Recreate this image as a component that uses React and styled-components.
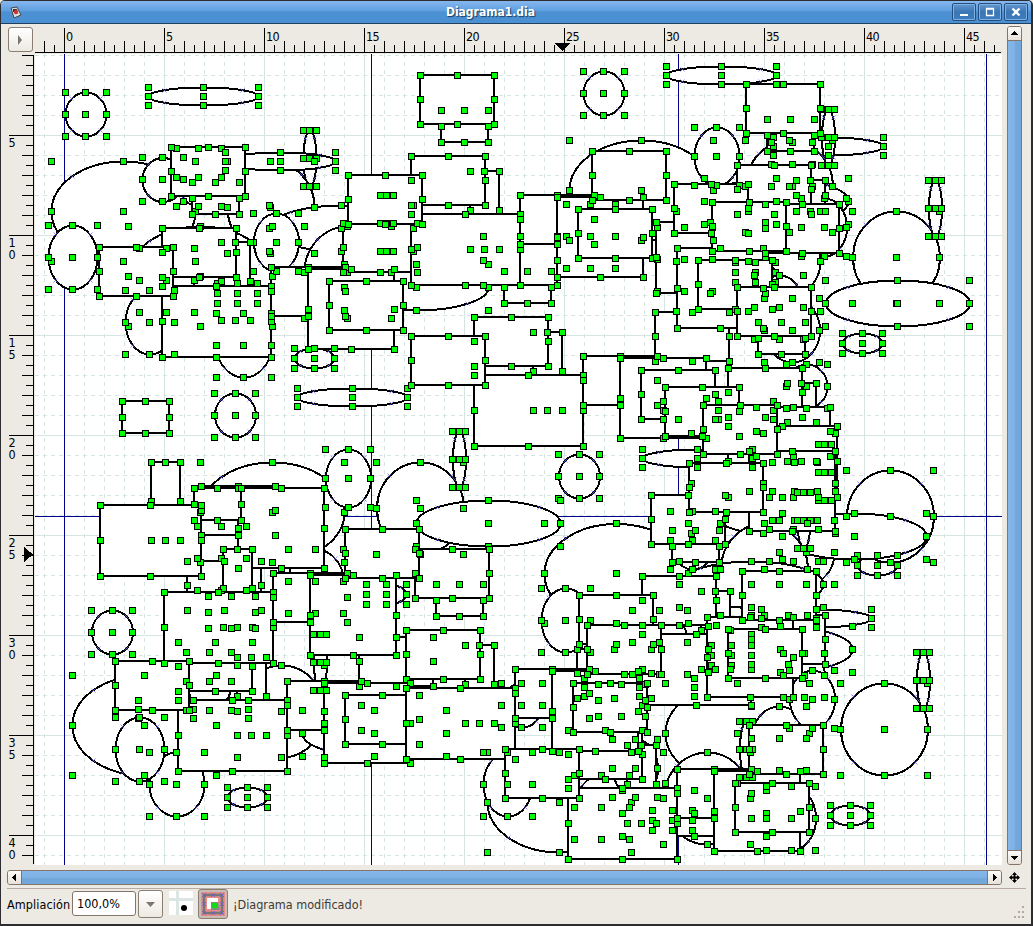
import React from "react";
import styled, { createGlobalStyle } from "styled-components";

const Global = createGlobalStyle`
  * { box-sizing: border-box; }
  body { margin: 0; background: #edeae3; overflow: hidden; }
`;
const sans = `"DejaVu Sans Condensed", "DejaVu Sans", sans-serif`;

/* Diagram objects, back to front.
   e = ellipse [cx, cy, rx, ry], r = box [x, y, width, height] */
const e = (cx, cy, rx, ry) => ({ kind: "e", cx, cy, rx, ry });
const r = (x, y, w, h) => ({ kind: "r", x, y, w, h });
const box = (x, y) => r(x, y, 74, 49);
const small = (x, y) => r(x, y, 47, 32);
const slim = (x, y) => r(x, y, 29, 78);
const panel = (x, y) => r(x, y, 109, 71);
const card = (x, y) => r(x, y, 86, 80);
const disc = (x, y) => e(x, y, 20.5, 22);
const wide = (x, y) => e(x, y, 55, 9);
const tall = (x, y) => e(x, y, 6.5, 28);
const big = (x, y) => e(x, y, 43.5, 46);
const huge = (x, y) => e(x, y, 72, 50);
const flat = (x, y) => e(x, y, 72, 23);
const mid = (x, y) => e(x, y, 22.5, 29);
const egg = (x, y) => e(x, y, 24.5, 32);
const round = (x, y) => e(x, y, 27.5, 32);
const oval = (x, y) => e(x, y, 20, 10);

const SHAPES = [
  disc(85.5, 114), wide(203, 96), huge(123, 211), mid(198.5, 177), tall(309.5, 158),
  big(270.5, 207), wide(280, 161), disc(162.5, 179.5), flat(341, 228), huge(200, 276),
  mid(276, 242), big(347.5, 272), tall(386.5, 223), round(166.5, 280), oval(237, 293),
  egg(149.5, 322), egg(72.5, 257), round(243.5, 345), oval(314, 358), flat(416, 287),
  wide(352, 397), disc(235, 415), egg(590.5, 236), disc(603.5, 93), huge(641, 190),
  wide(721, 75), mid(716.5, 156), wide(828, 146), round(684.5, 259), disc(792, 164),
  big(789, 186), flat(776, 201), mid(824, 227), tall(828, 137), big(896, 257),
  tall(935, 208), flat(897.5, 303), huge(748, 261), oval(755, 272), round(792, 330),
  egg(779, 307), oval(862, 343), disc(806.5, 386), wide(718, 410), tall(824.5, 472),
  huge(763, 483), mid(794.5, 491), egg(793.5, 529), oval(877, 565), big(890, 516),
  round(806.5, 552), flat(854, 536), tall(803.5, 520), wide(697, 458), disc(579, 476),
  huge(616, 573.5), egg(565.5, 620), mid(692.5, 540), big(764, 569), flat(751, 584),
  round(659.5, 642), oval(731, 655), wide(816, 618), flat(780, 649), disc(804, 675),
  huge(272, 512), round(315.5, 581), mid(348, 478), egg(221.5, 558), oval(386, 594),
  big(420, 508), tall(459, 459), flat(488, 523), disc(112, 632), wide(193, 709),
  huge(144, 725), round(176.5, 784), egg(139.5, 749), mid(209, 681), big(281, 711),
  tall(320, 662), flat(374, 733), oval(247, 797), disc(521.5, 705), huge(559, 802),
  egg(507.5, 784), round(601.5, 807), wide(639, 687), mid(635, 768), oval(672, 820),
  huge(737, 733), big(707, 798), flat(694, 813), egg(791, 818), tall(746, 749),
  round(779, 738), mid(812, 699), big(884, 729), tall(923, 680), oval(850, 815),

  small(192, 182), box(171, 147), slim(221, 242), panel(162, 286), box(162, 228), box(99, 247),
  box(271, 267), card(308, 269), r(122, 401, 47, 32), small(441, 110), box(420, 75),
  slim(470, 171), small(504, 271), box(483, 236), box(343, 223), panel(411, 214),
  box(411, 156), box(348, 175), box(329, 281), box(520, 195), card(557, 197),
  box(592, 151), box(578, 209), slim(533, 332), panel(474, 375), box(474, 317), box(411, 336),

  small(767, 119), box(746, 84), panel(656, 222), r(796, 180, 29, 31), box(737, 165),
  box(674, 184), box(655, 312), card(677, 248), box(698, 260), box(765, 204), box(712, 202),
  small(758, 322), box(737, 287), box(583, 356), card(620, 358), box(641, 370),
  slim(787, 383), box(728, 368), box(665, 387), box(756, 407), panel(728, 426),
  card(749, 451), box(703, 405), small(672, 530), box(651, 495), box(689, 463),

  slim(151, 462), box(187, 561), box(201, 486), card(238, 488), small(194, 488),
  slim(223, 549), r(100, 505, 101, 71), small(208, 596), slim(237, 657), box(178, 642),
  panel(164, 592), panel(178, 700), box(115, 661), box(273, 573), box(359, 637),
  card(310, 575), small(436, 584), box(415, 549), box(345, 529), slim(465, 645),
  box(406, 630), box(287, 681), card(324, 683), box(345, 695), panel(406, 688),

  slim(701, 591), box(577, 649), box(642, 576), panel(642, 634), small(598, 684),
  slim(627, 745), box(568, 730), panel(568, 788), box(515, 669), card(552, 671),
  box(505, 749), box(579, 595), box(587, 625), box(573, 683), box(751, 615),
  card(707, 617), box(742, 571), box(728, 629), box(677, 769), card(714, 771),
  box(749, 725), box(735, 783),
];

const knobs = (s) => {
  const [x0, y0, w, h] =
    s.kind === "r" ? [s.x, s.y, s.w, s.h] : [s.cx - s.rx, s.cy - s.ry, s.rx * 2, s.ry * 2];
  const pts = [];
  for (let i = 0; i < 3; i++)
    for (let j = 0; j < 3; j++) {
      if (s.kind === "r" && i === 1 && j === 1) continue;
      pts.push([Math.floor(x0 + (w * i) / 2), Math.floor(y0 + (h * j) / 2 + 0.4)]);
    }
  return pts;
};

const Shape = ({ s }) => {
  if (s.kind === "r")
    return <rect x={s.x} y={s.y} width={s.w} height={s.h} fill="#fff" stroke="#000" strokeWidth="2" />;
  const dx = s.rx * 0.707, dy = s.ry * 0.707;
  const marks = [[-dx, -dy], [dx, -dy], [-dx, dy], [dx, dy]]
    .map(([a, b]) => {
      const x = Math.round(s.cx + a), y = Math.round(s.cy + b);
      return `M${x - 1.5} ${y - 1.5}l4 4M${x + 2.5} ${y - 1.5}l-4 4`;
    })
    .join("");
  return (
    <g>
      <ellipse cx={s.cx + 0.5} cy={s.cy + 0.5} rx={s.rx} ry={s.ry} fill="#fff" stroke="#000" strokeWidth="2" />
      <path d={marks} stroke="#6464e4" strokeWidth="0.7" fill="none" shapeRendering="geometricPrecision" />
    </g>
  );
};

const range = (from, to, step) => {
  const out = [];
  for (let v = from; v <= to; v += step) out.push(v);
  return out;
};

const Grid = () => (
  <g stroke="#d5e5e2" strokeWidth="1">
    {range(44, 1001, 20).map((x) => (
      <path key={x} d={`M${x + 0.5} 54V865`} strokeDasharray={(x - 64) % 100 ? "4 4" : undefined} />
    ))}
    {range(55, 864, 20).map((y) => (
      <path key={y} d={`M35 ${y + 0.5}H1002`} strokeDasharray={(y - 35) % 100 ? "4 4" : undefined} />
    ))}
  </g>
);

const Diagram = () => (
  <Canvas viewBox="35 54 967 811" shapeRendering="crispEdges">
    <rect x="35" y="54" width="967" height="811" fill="#fff" />
    <Grid />
    <path d="M64.5 54V865M371.5 54V865M678.5 54V865M986.5 54V865M35 516.5H1002" stroke="#00008b" />
    {SHAPES.map((s, i) => <Shape key={i} s={s} />)}
    {SHAPES.flatMap((s, i) =>
      knobs(s).map(([x, y], j) => (
        <g key={`${i}-${j}`}>
          <rect x={x - 3} y={y - 3} width="7" height="7" fill="#000" />
          <rect x={x - 2} y={y - 2} width="5" height="5" fill="#0f0" />
        </g>
      ))
    )}
  </Canvas>
);

const HRuler = () => (
  <TopScale viewBox="35 24 967 30" shapeRendering="crispEdges">
    <path d="M35 52.5H1001" stroke="#000" />
    {range(44, 1000, 10).map((x) => {
      const top = (x - 64) % 100 === 0 ? 28 : (x - 64) % 20 === 0 ? 41 : 45;
      return <path key={x} d={`M${x + 0.5} ${top}V52`} stroke="#000" />;
    })}
    {range(0, 45, 5).map((n) => <text key={n} x={66 + n * 20} y="41">{n}</text>)}
    <path d="M555 43h15l-7.500 8z" fill="#000" />
  </TopScale>
);

const VRuler = () => (
  <SideScale viewBox="0 54 35 811" shapeRendering="crispEdges">
    <path d="M33.5 55V864" stroke="#000" />
    {range(55, 860, 10).map((y) => {
      const left = (y - 35) % 100 === 0 ? 9 : (y - 35) % 20 === 0 ? 22 : 26;
      return <path key={y} d={`M${left} ${y + 0.5}H33`} stroke="#000" />;
    })}
    {range(5, 40, 5).map((n) => (
      <text key={n}>
        {String(n).split("").map((d, i) => (
          <tspan key={i} x="8.5" y={47 + n * 20 + i * 12}>{d}</tspan>
        ))}
      </text>
    ))}
    <path d="M24 547v15l9-7.500z" fill="#000" />
  </SideScale>
);

const Window = styled.div`
  width: 1033px; height: 926px; display: flex; flex-direction: column;
  background: #edeae3; border: solid #2d2d30; border-width: 1px 2px 2px 1px;
  border-radius: 5px 5px 0 0; font-family: ${sans}; font-size: 12.5px; color: #000; overflow: hidden;
`;
const TitleBar = styled.header`
  height: 23px; flex: none; display: flex; align-items: center; padding: 0 3px 0 9px;
  background: linear-gradient(#86b7ee, #5e9fe0 45%, #4a90d2 50%, #4a90d2);
  border-bottom: 1px solid #20405f;
`;
const Title = styled.h1`
  flex: 1; margin: 0; padding-left: 7px; text-align: center; color: #fff;
  font: bold 12px ${sans}; text-shadow: 1px 1px 1px #1b3c60;
`;
const Controls = styled.div`display: flex; gap: 2px;`;
const Control = styled.button`
  width: 24px; height: 18px; padding: 0; border: 1px solid #254e7d; border-radius: 2px;
  background: linear-gradient(#6498d0, #3a76b4 50%, #3d7dc0);
  box-shadow: inset 0 0 0 1px #7fb0e2; display: flex; align-items: center; justify-content: center;
`;
const Workspace = styled.main`
  flex: none; display: grid; grid-template-columns: 34px 967px 1fr; grid-template-rows: 30px 811px;
`;
const Corner = styled.div`padding: 3px 0 0 7px;`;
const CornerButton = styled.button`
  width: 25px; height: 25px; padding: 0; border: 1px solid #8a7e73; border-radius: 3px;
  background: linear-gradient(#fff, #edeae3); display: flex; align-items: center; justify-content: center;
`;
const Scale = styled.svg`
  display: block;
  text { font: 12.5px ${sans}; letter-spacing: -0.6px; }
`;
const TopScale = styled(Scale)`width: 967px; height: 30px;`;
const SideScale = styled(Scale)`width: 35px; height: 811px; margin-left: -1px;`;
const Canvas = styled.svg`display: block; width: 967px; height: 811px;`;
const VTrack = styled.div`
  grid-column: 3; grid-row: 1 / span 2; margin: 2px 0 0 5px; width: 15px; height: 839px;
  display: flex; flex-direction: column; border: 1px solid #857468; border-radius: 3px; overflow: hidden;
`;
const HTrack = styled.div`
  width: 995px; height: 15px; display: flex; border: 1px solid #857468; border-radius: 3px; overflow: hidden;
`;
const Stepper = styled.div`
  flex: none; width: 13px; height: 13px;
  display: flex; align-items: center; justify-content: center; background: linear-gradient(#fdfcfb, #e6e1d8);
`;
const Thumb = styled.div`
  flex: 1; border: solid #857468; border-width: ${(p) => (p.$across ? "0 1px" : "1px 0")};
  background: linear-gradient(${(p) => (p.$across ? "to bottom" : "to right")}, #86b6ea, #7fb1e5 50%, #72a7dc 52%, #72a7dc);
`;
const ScrollRow = styled.div`
  flex: none; margin-top: 5px; padding-left: 6px; display: flex; align-items: center; gap: 7px;
`;
const StatusBar = styled.footer`
  flex: 1; margin: 3px 5px 0 6px; border-top: 1px solid #b7aaa2; display: flex; align-items: flex-start;
  padding-top: 1px;
`;
const Label = styled.span`line-height: 29px; width: 65px; white-space: nowrap; letter-spacing: 0.1px;`;
const ZoomInput = styled.div`
  width: 64px; height: 25px; margin-top: 1px; padding-left: 4px; line-height: 24px;
  background: #fff; border: 1px solid #857468; border-radius: 3px;
`;
const DropButton = styled(CornerButton)`height: 28px; margin: 0 6px 0 2px;`;
const SnapButton = styled(CornerButton)`
  width: 30px; height: 30px; margin: -1px 5px 0 5px; background: #c6beb5;
`;
const Message = styled.span`line-height: 29px; color: #3c3b39; flex: 1;`;
const Grip = styled.svg`align-self: flex-end; margin: 0 0 6px 0;`;
const GridToggle = styled.svg`margin-top: 1px;`;

const Arrow = ({ d, w = 9, h = 9 }) => (
  <svg width={w} height={h} shapeRendering="crispEdges"><path d={d} /></svg>
);

export default function App() {
  return (
    <Window>
      <Global />
      <TitleBar>
        <svg width="12" height="12" viewBox="0 0 12 12">
          <path d="M1 2l6-1 4 8-7 3z" fill="#ddd" stroke="#444" />
          <path d="M3 3l4 0v3H3z" fill="#333" /><circle cx="6" cy="6" r="2.2" fill="#c33" />
        </svg>
        <Title>Diagrama1.dia</Title>
        <Controls>
          <Control><svg width="12" height="10"><path d="M2 7h8v2H2z" fill="#fff" /></svg></Control>
          <Control><svg width="10" height="10"><path d="M1.500 2h7v6.500h-7zM1 1.500h8" fill="none" stroke="#fff" strokeWidth="1.3" /></svg></Control>
          <Control><svg width="10" height="10"><path d="M1.500 1.500l7 7m0-7l-7 7" stroke="#fff" strokeWidth="2.3" /></svg></Control>
        </Controls>
      </TitleBar>
      <Workspace>
        <Corner><CornerButton><svg width="5" height="10"><path d="M0 0l4 5-4 5z" fill="#7d746b" /></svg></CornerButton></Corner>
        <HRuler />
        <VTrack>
          <Stepper><Arrow d="M1 6h7L4.500 2z" /></Stepper>
          <Thumb />
          <Stepper><Arrow d="M1 3h7L4.500 7z" /></Stepper>
        </VTrack>
        <VRuler />
        <Diagram />
      </Workspace>
      <ScrollRow>
        <HTrack>
          <Stepper><Arrow d="M6 1v7L2 4.500z" /></Stepper>
          <Thumb $across />
          <Stepper><Arrow d="M3 1v7L7 4.500z" /></Stepper>
        </HTrack>
        <svg width="11" height="11" viewBox="0 0 11 11">
          <path d="M5.500 1v9M1 5.500h9" stroke="#000" strokeWidth="1.800" />
          <path d="M5.500 0l2.500 3h-5zM5.500 11l2.500-3h-5zM0 5.500l3-2.500v5zM11 5.500l-3-2.500v5z" />
        </svg>
      </ScrollRow>
      <StatusBar>
        <Label>Ampliación</Label>
        <ZoomInput>100,0%</ZoomInput>
        <DropButton><svg width="9" height="5"><path d="M0 0h9l-4.500 5z" fill="#7d746b" /></svg></DropButton>
        <GridToggle width="24" height="24">
          <path d="M0 0h24v24H0z" fill="#fff" /><path d="M8.500 0v24M0 8.500h24" stroke="#dbe5e3" strokeWidth="3" />
          <circle cx="15" cy="17" r="3" />
        </GridToggle>
        <SnapButton>
          <svg width="24" height="24">
            <path d="M0 0h24v24H0z" fill="#e88a8a" />
            <path d="M3 3h18v18H3z" fill="none" stroke="#777" strokeWidth="2.500" />
            <path d="M6 6h11v11H6z" fill="#fff" /><path d="M10 10h7l2 8h-9z" fill="#888" />
            <circle cx="13.500" cy="13.500" r="3" fill="#1d1" />
            <path
              d="M1 1l4 4m0-4l-4 4M10 1l4 4m0-4l-4 4M19 1l4 4m0-4l-4 4M1 10l4 4m0-4l-4 4M19 10l4 4m0-4l-4 4M1 19l4 4m0-4l-4 4M10 19l4 4m0-4l-4 4M19 19l4 4m0-4l-4 4"
              stroke="#5a5ae0" strokeWidth="0.700"
            />
          </svg>
        </SnapButton>
        <Message>¡Diagrama modificado!</Message>
        <Grip width="12" height="12" fill="#b5a99d">
          <path d="M8 0h2v2H8zM4 5h2v2H4zM8 5h2v2H8zM0 10h2v2H0zM4 10h2v2H4zM8 10h2v2H8z" />
        </Grip>
      </StatusBar>
    </Window>
  );
}
